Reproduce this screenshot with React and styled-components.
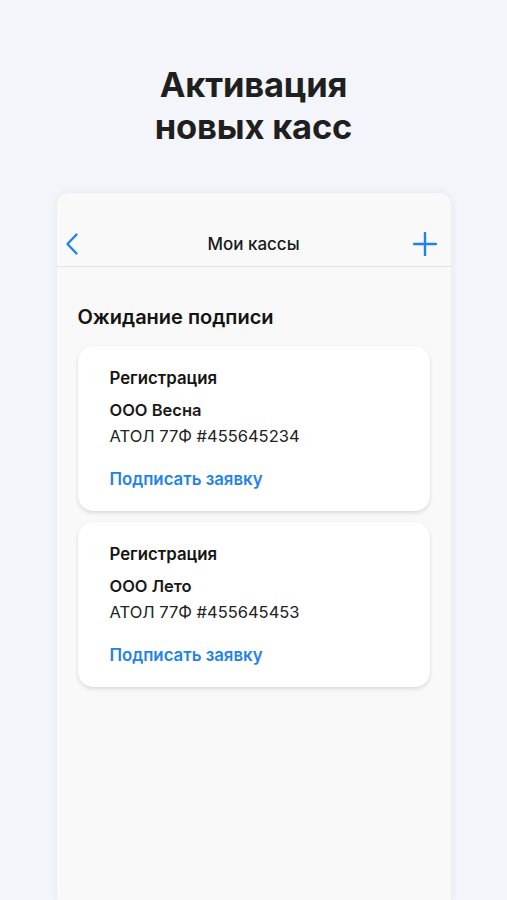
import React from "react";
import styled, { createGlobalStyle } from "styled-components";

const Global = createGlobalStyle`
  html, body { margin: 0; padding: 0; background: #f4f5fa; }
  body { font-family: Inter, "Noto Sans", sans-serif; -webkit-font-smoothing: antialiased; }
`;

const Page = styled.div`
  width: 507px;
  height: 900px;
  overflow: hidden;
  background: #f4f5fa;
  display: flex;
  flex-direction: column;
  align-items: center;
`;

const Headline = styled.h1`
  margin: 64px 0 0;
  font-family: Inter, "Noto Sans", sans-serif;
  font-weight: 700;
  font-size: 34.5px;
  line-height: 42px;
  letter-spacing: -0.2px;
  color: #1f1f1f;
  text-align: center;
`;

const Phone = styled.div`
  margin-top: 45px;
  width: 394px;
  flex: 1;
  background: #f9f9f9;
  border-radius: 12px 12px 0 0;
  box-shadow: 0 0 8px rgba(30, 40, 90, 0.08);
  display: flex;
  flex-direction: column;
`;

const NavBar = styled.div`
  height: 74px;
  box-sizing: border-box;
  border-bottom: 1px solid #e2e2e2;
  display: grid;
  grid-template-columns: 60px 1fr 60px;
  align-items: end;
  padding-bottom: 9px;
`;

const NavButton = styled.div`
  display: flex;
  justify-content: ${(p) => p.$align};
  align-items: center;
  height: 26px;
  padding: ${(p) => p.$pad};
`;

const NavTitle = styled.div`
  text-align: center;
  font-size: 17px;
  font-weight: 500;
  color: #1a1a1a;
  line-height: 26px;
`;

const Content = styled.div`
  padding: 37px 21px 0;
  display: flex;
  flex-direction: column;
  gap: 11px;
`;

const SectionTitle = styled.h2`
  margin: 0 0 5px;
  font-size: 20px;
  font-weight: 600;
  line-height: 26px;
  color: #141414;
`;

const Card = styled.div`
  background: #ffffff;
  border-radius: 15px;
  box-shadow: 0 2px 4px rgba(0, 0, 0, 0.12), 0 0 1px rgba(0, 0, 0, 0.05);
  padding: 20px 32px 20px;
  height: 165px;
  box-sizing: border-box;
  display: flex;
  flex-direction: column;
`;

const Kind = styled.div`
  font-size: 16.8px;
  font-weight: 600;
  line-height: 24px;
  color: #141414;
  margin-bottom: 8px;
`;

const Org = styled.div`
  font-size: 16.5px;
  font-weight: 600;
  line-height: 24px;
  color: #1a1a1a;
`;

const Device = styled.div`
  font-size: 16.5px;
  font-weight: 400;
  line-height: 28px;
  color: #222;
`;

const Action = styled.a`
  margin-top: auto;
  font-size: 16.8px;
  font-weight: 600;
  line-height: 24px;
  color: #1f83ea;
  text-decoration: none;
`;

const cards = [
  { org: "ООО Весна", device: "АТОЛ 77Ф #455645234" },
  { org: "ООО Лето", device: "АТОЛ 77Ф #455645453" },
];

export default function App() {
  return (
    <Page>
      <Global />
      <Headline>
        Активация
        <br />
        новых касс
      </Headline>
      <Phone>
        <NavBar>
          <NavButton $align="flex-start" $pad="0 0 0 8px">
            <svg width="14" height="22" viewBox="0 0 14 22" fill="none">
              <path d="M11.5 1.5 L2.5 11 L11.5 20.5" stroke="#1f83ea" strokeWidth="2.4" strokeLinecap="round" strokeLinejoin="round" />
            </svg>
          </NavButton>
          <NavTitle>Мои кассы</NavTitle>
          <NavButton $align="flex-end" $pad="0 14px 0 0">
            <svg width="24" height="24" viewBox="0 0 24 24" fill="none">
              <path d="M12 1 V23 M1 12 H23" stroke="#1f83ea" strokeWidth="2.4" strokeLinecap="round" />
            </svg>
          </NavButton>
        </NavBar>
        <Content>
          <SectionTitle>Ожидание подписи</SectionTitle>
          {cards.map((c) => (
            <Card key={c.org}>
              <Kind>Регистрация</Kind>
              <Org>{c.org}</Org>
              <Device>{c.device}</Device>
              <Action href="#">Подписать заявку</Action>
            </Card>
          ))}
        </Content>
      </Phone>
    </Page>
  );
}
